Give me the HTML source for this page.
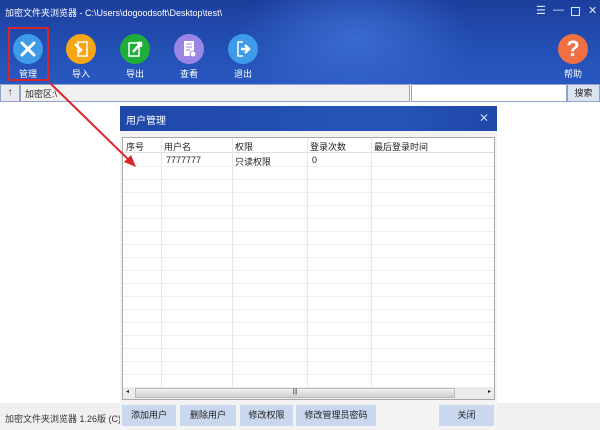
<!DOCTYPE html>
<html><head><meta charset="utf-8">
<style>
*{margin:0;padding:0;box-sizing:border-box}
body{width:600px;height:430px;overflow:hidden;position:relative;background:#fff;font-family:"Liberation Sans","Noto Sans CJK SC",sans-serif;font-size:9px;color:#222}
.hdr{position:absolute;left:0;top:0;width:600px;height:84px;background:radial-gradient(ellipse 120px 70px at 355px 40px,#3a6ad0 0%,rgba(40,80,190,0) 100%),linear-gradient(180deg,#1c3e9c 0%,#2350b5 60%,#2958c0 100%)}
.title{position:absolute;left:5px;top:6px;color:#fff;font-size:9px}
.wc{position:absolute;top:4px;color:#dfe6f7;font-size:11px}
.ic{position:absolute;width:30px;height:30px;border-radius:50%;top:34px}
.lb{position:absolute;top:67px;color:#fff;font-size:9px;width:40px;text-align:center}
.addr{position:absolute;top:84px;height:18px;border:1px solid #8fa3c8}
.dlg{position:absolute;left:120px;top:106px;width:377px;height:324px;background:#f3f3f3}
.dt{height:25px;background:linear-gradient(90deg,#1f48a8,#2554b8 70%,#1f48a8);color:#fff;font-size:10px;padding:6px 6px}
.tbl{position:absolute;left:2px;top:31px;width:373px;height:263px;background:#fff;border:1px solid #a8a8a8}
.vl{position:absolute;top:0;width:1px;height:249px;background:#e6e6e6}
.hl{position:absolute;left:0;width:371px;height:1px;background:#eeeeee}
.btn{position:absolute;top:405px;height:21px;background:#c9d7ef;font-size:9px;text-align:center;line-height:21px;color:#222}
</style></head><body>
<div class="hdr">
 <div class="title">加密文件夹浏览器 - C:\Users\dogoodsoft\Desktop\test\</div>
 <div class="wc" style="left:536px">☰</div>
 <div class="wc" style="left:553px">—</div>
 <div style="position:absolute;left:571px;top:7px;width:9px;height:9px;border:1px solid #dfe6f7"></div>
 <div class="wc" style="left:588px">✕</div>

 <div class="ic" style="left:13px;background:#3d9be8"><svg width="30" height="30"><path d="M9 9 L21 21 M21 9 L9 21" stroke="#fff" stroke-width="3" stroke-linecap="round"/></svg></div>
 <div class="lb" style="left:8px">管理</div>
 <div class="ic" style="left:66px;background:#f5a615"><svg width="30" height="30"><rect x="12" y="8" width="9" height="14" fill="none" stroke="#fff" stroke-width="1.5"/><path d="M9 10 L15 16 L12 19" stroke="#fff" stroke-width="2.5" fill="none"/></svg></div>
 <div class="lb" style="left:61px">导入</div>
 <div class="ic" style="left:120px;background:#1fae3a"><svg width="30" height="30"><rect x="9" y="9" width="10" height="13" fill="none" stroke="#fff" stroke-width="1.5"/><path d="M13 18 L20 10 M17 9 L21 9 L21 13" stroke="#fff" stroke-width="2.5" fill="none"/></svg></div>
 <div class="lb" style="left:115px">导出</div>
 <div class="ic" style="left:174px;background:#9a85e6"><svg width="30" height="30"><rect x="10" y="7" width="10" height="15" fill="#fff"/><path d="M12 10h6M12 13h6M12 16h4" stroke="#9a85e6"/><circle cx="19" cy="20" r="3" fill="#fff" stroke="#9a85e6"/></svg></div>
 <div class="lb" style="left:169px">查看</div>
 <div class="ic" style="left:228px;background:#3d9be8"><svg width="30" height="30"><path d="M15 8 H10 V22 H15" stroke="#fff" stroke-width="1.5" fill="none"/><path d="M13 15 H19 M17 11 L21 15 L17 19" stroke="#fff" stroke-width="2.5" fill="none"/></svg></div>
 <div class="lb" style="left:223px">退出</div>
 <div class="ic" style="left:558px;background:#f06f43;color:#fff;font-size:22px;font-weight:bold;text-align:center;line-height:30px">?</div>
 <div class="lb" style="left:553px">帮助</div>
</div>
<div style="position:absolute;left:8px;top:27px;width:41px;height:54px;border:2px solid #d7262b"></div>

<div class="addr" style="left:0;width:20px;background:#e8eaf0;text-align:center;line-height:16px;font-size:10px">↑</div>
<div class="addr" style="left:20px;width:390px;background:#f0f0f0;padding:2px 4px">加密区:\</div>
<div class="addr" style="left:411px;width:156px;background:#fff"></div>
<div class="addr" style="left:567px;width:33px;background:#dbe3f1;text-align:center;line-height:16px">搜索</div>

<div style="position:absolute;left:0;top:403px;width:600px;height:27px;background:#f0f0f0"></div>
<div style="position:absolute;left:5px;top:412px;color:#333;font-size:9px">加密文件夹浏览器 1.26版 (C) 2</div>

<div class="dlg">
 <div class="dt">用户管理<span style="position:absolute;right:8px;top:5px;font-size:12px;color:#c8d3ee">✕</span></div>
 <div class="tbl">
  <div style="position:absolute;left:0;top:0;width:371px;height:15px;border-bottom:1px solid #ddd"></div>
  <div class="vl" style="left:38px"></div><div class="vl" style="left:109px"></div><div class="vl" style="left:184px"></div><div class="vl" style="left:248px"></div>
  <div class="hl" style="top:28px"></div><div class="hl" style="top:41px"></div><div class="hl" style="top:54px"></div><div class="hl" style="top:67px"></div><div class="hl" style="top:80px"></div><div class="hl" style="top:93px"></div><div class="hl" style="top:106px"></div><div class="hl" style="top:119px"></div><div class="hl" style="top:132px"></div><div class="hl" style="top:145px"></div><div class="hl" style="top:158px"></div><div class="hl" style="top:171px"></div><div class="hl" style="top:184px"></div><div class="hl" style="top:197px"></div><div class="hl" style="top:210px"></div><div class="hl" style="top:223px"></div><div class="hl" style="top:236px"></div>
  <div style="position:absolute;top:2px;left:3px">序号</div>
  <div style="position:absolute;top:2px;left:41px">用户名</div>
  <div style="position:absolute;top:2px;left:112px">权限</div>
  <div style="position:absolute;top:2px;left:187px">登录次数</div>
  <div style="position:absolute;top:2px;left:251px">最后登录时间</div>
  <div style="position:absolute;top:17px;left:43px">7777777</div>
  <div style="position:absolute;top:17px;left:112px">只读权限</div>
  <div style="position:absolute;top:17px;left:189px">0</div>
  <div style="position:absolute;left:0;top:249px;width:371px;height:12px;background:#ececec">
   <span style="position:absolute;left:3px;top:1px;font-size:6px">◂</span>
   <div style="position:absolute;left:12px;top:1px;width:320px;height:10px;background:linear-gradient(#f2f2f2,#cfcfcf);border:1px solid #bbb;font-size:6px;text-align:center">|||</div>
   <span style="position:absolute;right:3px;top:1px;font-size:6px">▸</span>
  </div>
 </div>
</div>
<div class="btn" style="left:122px;width:54px">添加用户</div>
<div class="btn" style="left:180px;width:56px">删除用户</div>
<div class="btn" style="left:240px;width:53px">修改权限</div>
<div class="btn" style="left:296px;width:80px">修改管理员密码</div>
<div class="btn" style="left:439px;width:55px">关闭</div>

<svg style="position:absolute;left:0;top:0" width="600" height="430"><path d="M50 83 L132 163" stroke="#d7262b" stroke-width="2"/><path d="M136 167 L124 162 L131 155 Z" fill="#d7262b"/></svg>
</body></html>
